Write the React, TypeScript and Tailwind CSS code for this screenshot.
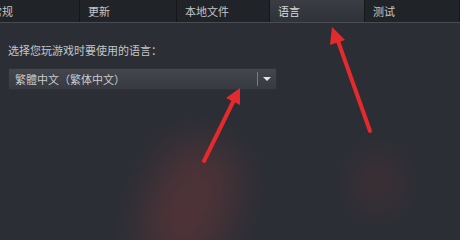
import React from "react";

const tabs = [
  { label: "常规", width: "w-[97px]", extra: "-ml-[17px]" },
  { label: "更新", width: "w-[97px]", extra: "" },
  { label: "本地文件", width: "w-[93px]", extra: "" },
  { label: "语言", width: "w-[95px]", extra: "", active: true },
  { label: "测试", width: "flex-1", extra: "" },
];

function Arrows() {
  return (
    <svg className="absolute inset-0 pointer-events-none" width="460" height="240" viewBox="0 0 460 240">
      {/* 下拉框上的箭头 */}
      <path d="M204 161 L234 100" stroke="#e42a2c" strokeWidth="4" strokeLinecap="round" />
      <polygon points="240,88 240,105 226,98" fill="#e42a2c" />
      {/* 标签页上的箭头 */}
      <path d="M370 131 L338 41" stroke="#e42a2c" strokeWidth="4" strokeLinecap="round" />
      <polygon points="332,27 345,40 330,45" fill="#e42a2c" />
    </svg>
  );
}

export default function App() {
  return (
    <div
      className="relative w-[460px] h-[240px] overflow-hidden bg-[#2b2e35] text-[11px] text-[#c3c6cb]"
      style={{ fontFamily: '"Noto Sans CJK SC", "Noto Sans", sans-serif' }}
    >
      {/* 标签栏 */}
      <div className="flex h-[23px] bg-[#202328] border-b border-[#494c53]">
        {tabs.map((t) => (
          <div
            key={t.label}
            className={`${t.width} ${t.extra} shrink-0 flex items-center pl-2 border-r border-[#15171a] ${
              t.active ? "bg-gradient-to-b from-[#3a3d44] to-[#2f3238] text-[#d8dadd]" : ""
            }`}
          >
            {t.label}
          </div>
        ))}
      </div>

      {/* 内容 */}
      <div className="px-2 pt-[22px]">
        <div className="leading-none">选择您玩游戏时要使用的语言：</div>
        <div className="mt-[12px] w-[269px] h-[22px] flex items-center bg-gradient-to-b from-[#43464d] to-[#373a40] border border-[#2e3136] rounded-[1px]">
          <span className="flex-1 pl-[6px] text-[#c9cbce]">繁體中文（繁体中文）</span>
          <div className="w-px h-[14px] bg-[#7a7d83]" />
          <div className="w-[18px] flex justify-center">
            <div className="w-0 h-0 border-l-[4px] border-r-[4px] border-t-[4px] border-l-transparent border-r-transparent border-t-[#e2e4e6]" />
          </div>
        </div>
      </div>

      {/* 模糊的红色光晕 */}
      <div className="absolute left-[150px] top-[140px] w-[80px] h-[130px] rounded-full bg-[#7a3a3c] opacity-45 blur-[20px] rotate-[20deg]" />
      <div className="absolute left-[350px] top-[150px] w-[55px] h-[65px] rounded-full bg-[#6a3537] opacity-25 blur-[16px]" />

      <Arrows />
    </div>
  );
}
